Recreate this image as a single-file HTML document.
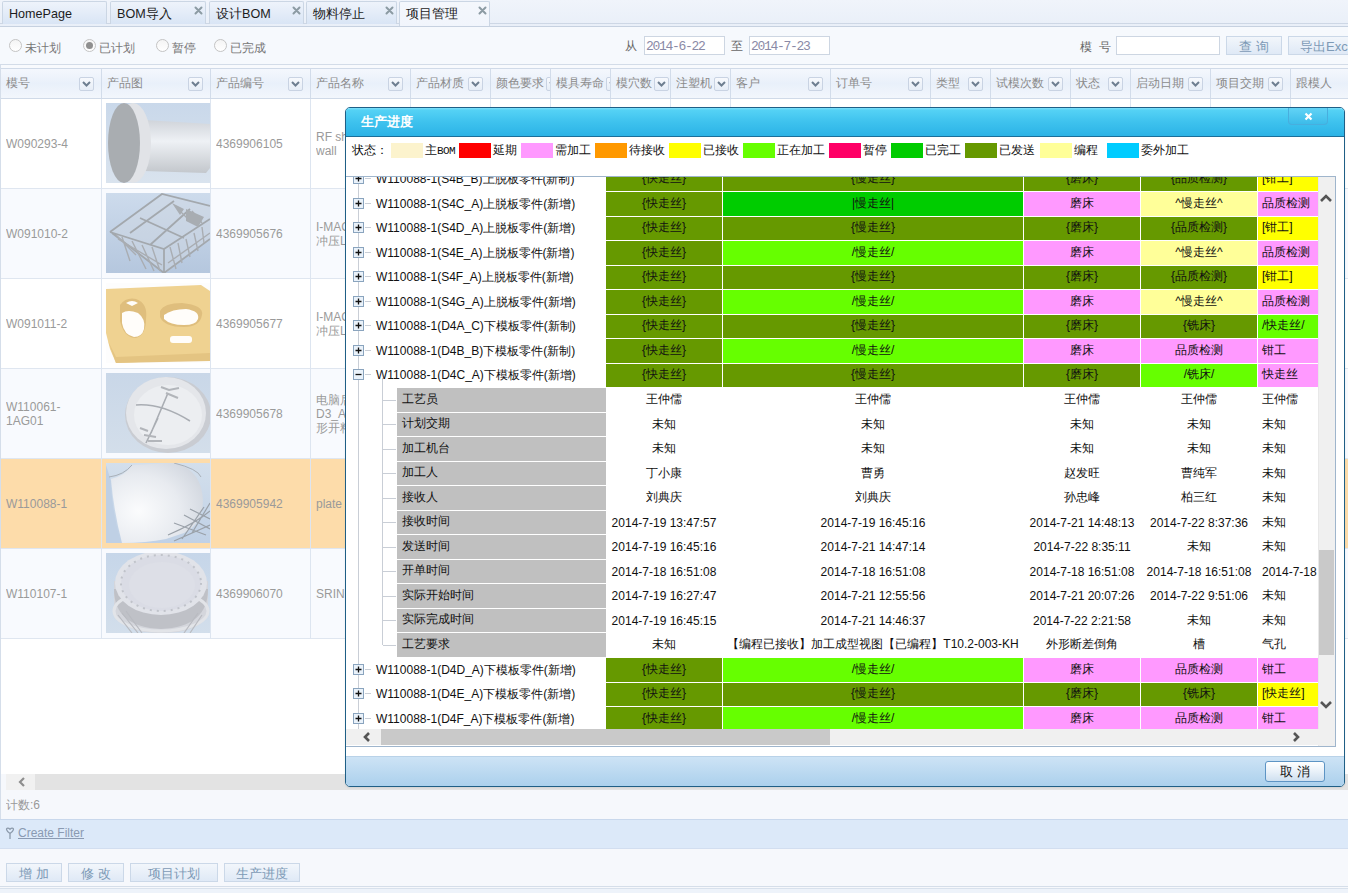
<!DOCTYPE html><html><head><meta charset="utf-8"><style>

*{box-sizing:border-box}
html,body{margin:0;padding:0}
body{width:1348px;height:893px;overflow:hidden;position:relative;background:#f6f8fc;font-family:"Liberation Sans",sans-serif;font-size:12px;color:#333}
.ab{position:absolute}
.tab{position:absolute;top:1px;height:23px;border:1px solid #cbd6e4;border-bottom:none;border-radius:2px 2px 0 0;background:linear-gradient(#eef3fb,#d9e5f5);font-size:12.6px;color:#1c1c1c;line-height:24px;padding-left:6px;white-space:nowrap}
.tab.act{background:linear-gradient(#f4f7fc,#f1f5fc);height:25px}
.tx{position:absolute;top:4px;width:9px;height:9px}
.radio{position:absolute;top:39px;width:13px;height:13px;border-radius:50%;border:1px solid #c4c4c4;background:linear-gradient(#f4f4f4,#fff)}
.rl{position:absolute;top:40px;font-size:12.4px;color:#777;line-height:17px;white-space:nowrap}
.inp{position:absolute;background:#fff;border:1px solid #cdd6e2}
.btn{position:absolute;border:1px solid #cbd8e8;background:linear-gradient(#f2f6fb,#dfe9f6);color:#7d9ab6;text-align:center;font-size:13px;white-space:nowrap}
.hc{position:absolute;top:69px;height:29px;border-right:1px solid #d2dcea;font-size:12px;color:#8b8b8b;line-height:29px;padding-left:6px;white-space:nowrap;overflow:hidden;display:flex;align-items:center}
.dd{position:relative;flex:none;margin-left:auto;margin-right:7px;width:15px;height:14px;border:1px solid #c9d3e3;border-radius:2px;background:linear-gradient(#f7f9fd,#e6edf7)}
.cell{position:absolute;font-size:12px;color:#9a9a9a;white-space:nowrap;overflow:hidden}
.vl{position:absolute;width:1px;background:#dde5f0}
.hl{position:absolute;height:1px;background:#dfe6f0}

</style></head><body>
<div class="ab" style="left:0;top:0;width:1348px;height:26px;background:linear-gradient(#f0f4fb,#e9eff8)"></div>
<div class="ab" style="left:0;top:23px;width:1348px;height:1px;background:#cdd7e5"></div>
<div class="ab" style="left:0;top:26px;width:1348px;height:1px;background:#c6d1e0"></div>
<div class="tab" style="left:2px;width:105px">HomePage
</div>
<div class="tab" style="left:110px;width:96px">BOM导入
<svg class="tx" style="left:83px" viewBox="0 0 9 9"><path d="M1.5 1.5L7.5 7.5M7.5 1.5L1.5 7.5" stroke="#8c9ba3" stroke-width="2" stroke-linecap="round"/></svg>
</div>
<div class="tab" style="left:209px;width:95px">设计BOM
<svg class="tx" style="left:82px" viewBox="0 0 9 9"><path d="M1.5 1.5L7.5 7.5M7.5 1.5L1.5 7.5" stroke="#8c9ba3" stroke-width="2" stroke-linecap="round"/></svg>
</div>
<div class="tab" style="left:306px;width:91px">物料停止
<svg class="tx" style="left:78px" viewBox="0 0 9 9"><path d="M1.5 1.5L7.5 7.5M7.5 1.5L1.5 7.5" stroke="#8c9ba3" stroke-width="2" stroke-linecap="round"/></svg>
</div>
<div class="tab act" style="left:399px;width:91px">项目管理
<svg class="tx" style="left:78px" viewBox="0 0 9 9"><path d="M1.5 1.5L7.5 7.5M7.5 1.5L1.5 7.5" stroke="#8c9ba3" stroke-width="2" stroke-linecap="round"/></svg>
</div>
<div class="ab" style="left:0;top:27px;width:1348px;height:37px;background:#f6f9fd"></div>
<div class="ab" style="left:0;top:64px;width:1348px;height:1px;background:#d3dce8"></div>
<div class="ab" style="left:0;top:65px;width:1348px;height:3px;background:#f8fafd"></div>
<div class="radio" style="left:9px"></div>
<div class="rl" style="left:25px">未计划</div>
<div class="radio" style="left:83px"></div>
<div class="ab" style="left:86px;top:42px;width:7px;height:7px;border-radius:50%;background:#8f8f8f"></div>
<div class="rl" style="left:99px">已计划</div>
<div class="radio" style="left:156px"></div>
<div class="rl" style="left:172px">暂停</div>
<div class="radio" style="left:214px"></div>
<div class="rl" style="left:230px">已完成</div>
<div class="rl" style="left:625px;top:38px;color:#666">从</div>
<div class="inp" style="left:644px;top:36px;width:81px;height:19px"></div>
<div class="ab" style="left:646px;top:38px;font:13px 'Liberation Mono',monospace;color:#8a8aa6;line-height:17px;letter-spacing:-1.3px">2014-6-22</div>
<div class="rl" style="left:731px;top:38px;color:#666">至</div>
<div class="inp" style="left:749px;top:36px;width:81px;height:19px"></div>
<div class="ab" style="left:751px;top:38px;font:13px 'Liberation Mono',monospace;color:#8a8aa6;line-height:17px;letter-spacing:-1.3px">2014-7-23</div>
<div class="rl" style="left:1080px;top:38.5px;color:#666">模&nbsp;&nbsp;号</div>
<div class="inp" style="left:1116px;top:36px;width:104px;height:19px"></div>
<div class="btn" style="left:1226px;top:36px;width:56px;height:19px;line-height:19px">查&nbsp;询</div>
<div class="btn" style="left:1288px;top:36px;width:70px;height:19px;line-height:19px;text-align:left;padding-left:11px">导出Excel</div>
<div class="ab" style="left:0;top:68px;width:1348px;height:31px;border-top:1px solid #d0dae8;border-bottom:1px solid #d0dae8;background:linear-gradient(#f4f7fd 0%,#e9f0fa 50%,#f2f6fc 100%)"></div>
<div class="hc" style="left:0px;width:102px"><span style="flex:none;margin-right:2px">模号</span>
<div class="dd"><svg style="position:absolute;left:2px;top:3px" width="9" height="6" viewBox="0 0 9 6"><path d="M1 1L4.5 4.5L8 1" stroke="#6e7e90" stroke-width="2" fill="none"/></svg></div>
</div>
<div class="hc" style="left:101px;width:110px"><span style="flex:none;margin-right:2px">产品图</span>
<div class="dd"><svg style="position:absolute;left:2px;top:3px" width="9" height="6" viewBox="0 0 9 6"><path d="M1 1L4.5 4.5L8 1" stroke="#6e7e90" stroke-width="2" fill="none"/></svg></div>
</div>
<div class="hc" style="left:210px;width:101px"><span style="flex:none;margin-right:2px">产品编号</span>
<div class="dd"><svg style="position:absolute;left:2px;top:3px" width="9" height="6" viewBox="0 0 9 6"><path d="M1 1L4.5 4.5L8 1" stroke="#6e7e90" stroke-width="2" fill="none"/></svg></div>
</div>
<div class="hc" style="left:310px;width:101px"><span style="flex:none;margin-right:2px">产品名称</span>
<div class="dd"><svg style="position:absolute;left:2px;top:3px" width="9" height="6" viewBox="0 0 9 6"><path d="M1 1L4.5 4.5L8 1" stroke="#6e7e90" stroke-width="2" fill="none"/></svg></div>
</div>
<div class="hc" style="left:410px;width:81px"><span style="flex:none;margin-right:2px">产品材质</span>
<div class="dd"><svg style="position:absolute;left:2px;top:3px" width="9" height="6" viewBox="0 0 9 6"><path d="M1 1L4.5 4.5L8 1" stroke="#6e7e90" stroke-width="2" fill="none"/></svg></div>
</div>
<div class="hc" style="left:490px;width:61px"><span style="flex:none;margin-right:2px">颜色要求</span>
<div class="dd"><svg style="position:absolute;left:2px;top:3px" width="9" height="6" viewBox="0 0 9 6"><path d="M1 1L4.5 4.5L8 1" stroke="#6e7e90" stroke-width="2" fill="none"/></svg></div>
</div>
<div class="hc" style="left:550px;width:61px"><span style="flex:none;margin-right:2px">模具寿命</span>
<div class="dd"><svg style="position:absolute;left:2px;top:3px" width="9" height="6" viewBox="0 0 9 6"><path d="M1 1L4.5 4.5L8 1" stroke="#6e7e90" stroke-width="2" fill="none"/></svg></div>
</div>
<div class="hc" style="left:610px;width:61px"><span style="flex:none;margin-right:2px">模穴数</span>
<div class="dd"><svg style="position:absolute;left:2px;top:3px" width="9" height="6" viewBox="0 0 9 6"><path d="M1 1L4.5 4.5L8 1" stroke="#6e7e90" stroke-width="2" fill="none"/></svg></div>
</div>
<div class="hc" style="left:670px;width:61px"><span style="flex:none;margin-right:2px">注塑机</span>
<div class="dd"><svg style="position:absolute;left:2px;top:3px" width="9" height="6" viewBox="0 0 9 6"><path d="M1 1L4.5 4.5L8 1" stroke="#6e7e90" stroke-width="2" fill="none"/></svg></div>
</div>
<div class="hc" style="left:730px;width:101px"><span style="flex:none;margin-right:2px">客户</span>
<div class="dd"><svg style="position:absolute;left:2px;top:3px" width="9" height="6" viewBox="0 0 9 6"><path d="M1 1L4.5 4.5L8 1" stroke="#6e7e90" stroke-width="2" fill="none"/></svg></div>
</div>
<div class="hc" style="left:830px;width:101px"><span style="flex:none;margin-right:2px">订单号</span>
<div class="dd"><svg style="position:absolute;left:2px;top:3px" width="9" height="6" viewBox="0 0 9 6"><path d="M1 1L4.5 4.5L8 1" stroke="#6e7e90" stroke-width="2" fill="none"/></svg></div>
</div>
<div class="hc" style="left:930px;width:61px"><span style="flex:none;margin-right:2px">类型</span>
<div class="dd"><svg style="position:absolute;left:2px;top:3px" width="9" height="6" viewBox="0 0 9 6"><path d="M1 1L4.5 4.5L8 1" stroke="#6e7e90" stroke-width="2" fill="none"/></svg></div>
</div>
<div class="hc" style="left:990px;width:81px"><span style="flex:none;margin-right:2px">试模次数</span>
<div class="dd"><svg style="position:absolute;left:2px;top:3px" width="9" height="6" viewBox="0 0 9 6"><path d="M1 1L4.5 4.5L8 1" stroke="#6e7e90" stroke-width="2" fill="none"/></svg></div>
</div>
<div class="hc" style="left:1070px;width:61px"><span style="flex:none;margin-right:2px">状态</span>
<div class="dd"><svg style="position:absolute;left:2px;top:3px" width="9" height="6" viewBox="0 0 9 6"><path d="M1 1L4.5 4.5L8 1" stroke="#6e7e90" stroke-width="2" fill="none"/></svg></div>
</div>
<div class="hc" style="left:1130px;width:81px"><span style="flex:none;margin-right:2px">启动日期</span>
<div class="dd"><svg style="position:absolute;left:2px;top:3px" width="9" height="6" viewBox="0 0 9 6"><path d="M1 1L4.5 4.5L8 1" stroke="#6e7e90" stroke-width="2" fill="none"/></svg></div>
</div>
<div class="hc" style="left:1210px;width:81px"><span style="flex:none;margin-right:2px">项目交期</span>
<div class="dd"><svg style="position:absolute;left:2px;top:3px" width="9" height="6" viewBox="0 0 9 6"><path d="M1 1L4.5 4.5L8 1" stroke="#6e7e90" stroke-width="2" fill="none"/></svg></div>
</div>
<div class="hc" style="left:1290px;width:111px"><span style="flex:none;margin-right:2px">跟模人</span>
</div>
<div class="ab" style="left:0;top:99px;width:1348px;height:89px;background:#ffffff"></div>
<div class="ab" style="left:0;top:188px;width:1348px;height:1px;background:#dfe6f0"></div>
<div class="cell" style="left:6px;top:99px;height:89px;width:94px;display:flex;align-items:center;line-height:14px">W090293-4</div>
<div class="cell" style="left:216px;top:99px;height:89px;width:94px;display:flex;align-items:center">4369906105</div>
<div class="cell" style="left:316px;top:99px;height:89px;width:94px;display:flex;align-items:center;line-height:14px">RF sh<br>wall</div>
<div class="ab" id="img0" style="left:106px;top:103px;width:104px;height:80px;overflow:hidden"><svg width="104" height="80" viewBox="0 0 104 80"><defs><linearGradient id="g0" x1="0" y1="0" x2="0" y2="1"><stop offset="0" stop-color="#c9d8ea"/><stop offset="1" stop-color="#d9e3ee"/></linearGradient>
<linearGradient id="c0" x1="0" y1="0" x2="0" y2="1"><stop offset="0" stop-color="#d0d4da"/><stop offset=".4" stop-color="#eef1f5"/><stop offset="1" stop-color="#c3c7cc"/></linearGradient></defs>
<rect width="104" height="80" fill="url(#g0)"/><path d="M38 17L104 21V65L100 70L38 68Z" fill="url(#c0)"/><ellipse cx="27" cy="40" rx="18" ry="40" fill="#e1e3e7"/><ellipse cx="18" cy="40" rx="16" ry="40" fill="#a9adb1"/></svg></div>
<div class="ab" style="left:0;top:189px;width:1348px;height:89px;background:#f8fafe"></div>
<div class="ab" style="left:0;top:278px;width:1348px;height:1px;background:#dfe6f0"></div>
<div class="cell" style="left:6px;top:189px;height:89px;width:94px;display:flex;align-items:center;line-height:14px">W091010-2</div>
<div class="cell" style="left:216px;top:189px;height:89px;width:94px;display:flex;align-items:center">4369905676</div>
<div class="cell" style="left:316px;top:189px;height:89px;width:94px;display:flex;align-items:center;line-height:14px">I-MAC<br>冲压L</div>
<div class="ab" id="img1" style="left:106px;top:193px;width:104px;height:80px;overflow:hidden"><svg width="104" height="80" viewBox="0 0 104 80"><defs><linearGradient id="g1" x1="0" y1="0" x2="0" y2="1"><stop offset="0" stop-color="#cddbec"/><stop offset="1" stop-color="#b5c7de"/></linearGradient></defs>
<rect width="104" height="80" fill="url(#g1)"/>
<path d="M4 39L56 1L104 13L104 45L60 80Z" fill="#cfd8e2" opacity=".5"/>
<path d="M4 39L56 1L104 13M4 39L58 56L104 26M6 40L58 80L104 46M58 56V80M34 25L78 45M44 52L84 16M24 40L68 8" stroke="#a3a8ad" stroke-width="1.8" fill="none"/>
<path d="M10 42L30 62M16 44L24 68M26 48L40 76M36 52L48 78M46 54L54 78M64 54L70 76M72 50L76 70M80 46L84 64M88 40L92 58M96 34L98 50M62 70L104 40M12 46L56 72M70 14L82 26M86 18L96 30" stroke="#a9adb2" stroke-width="1.4" fill="none"/>
<path d="M66 10L78 16L74 22ZM80 16L98 24L92 34L80 28Z" fill="#a8adb2"/></svg></div>
<div class="ab" style="left:0;top:279px;width:1348px;height:89px;background:#ffffff"></div>
<div class="ab" style="left:0;top:368px;width:1348px;height:1px;background:#dfe6f0"></div>
<div class="cell" style="left:6px;top:279px;height:89px;width:94px;display:flex;align-items:center;line-height:14px">W091011-2</div>
<div class="cell" style="left:216px;top:279px;height:89px;width:94px;display:flex;align-items:center">4369905677</div>
<div class="cell" style="left:316px;top:279px;height:89px;width:94px;display:flex;align-items:center;line-height:14px">I-MAC<br>冲压L</div>
<div class="ab" id="img2" style="left:106px;top:283px;width:104px;height:80px;overflow:hidden"><svg width="104" height="80" viewBox="0 0 104 80"><rect width="104" height="80" fill="#fdfdfd"/>
<path d="M0 6L95 2L104 8V76L10 80L4 66L0 50Z" fill="#efd291"/>
<path d="M2 58L10 74L104 70V78L10 80Z" fill="#e4c482"/>
<path d="M14 22Q20 14 30 16Q42 20 40 36Q40 52 30 55Q18 55 14 38Z" fill="#dfbe7d"/>
<path d="M16 30Q22 26 32 30Q40 36 38 46Q36 54 28 54Q18 52 16 40Z" fill="#fffdfa"/>
<path d="M20 20Q26 16 32 20L26 23Z" fill="#fffdfa"/>
<path d="M54 28Q58 20 76 20Q98 22 96 32Q94 44 78 44Q58 44 54 34Z" fill="#dfbe7d"/>
<path d="M58 32Q66 26 80 26Q94 28 92 36Q90 42 78 42Q64 42 58 36Z" fill="#fffdfa"/>
<rect x="64" y="53" width="22" height="7" rx="3" fill="#fffdfa"/></svg></div>
<div class="ab" style="left:0;top:369px;width:1348px;height:89px;background:#f8fafe"></div>
<div class="ab" style="left:0;top:458px;width:1348px;height:1px;background:#dfe6f0"></div>
<div class="cell" style="left:6px;top:369px;height:89px;width:94px;display:flex;align-items:center;line-height:14px">W110061-<br>1AG01</div>
<div class="cell" style="left:216px;top:369px;height:89px;width:94px;display:flex;align-items:center">4369905678</div>
<div class="cell" style="left:316px;top:369px;height:89px;width:94px;display:flex;align-items:center;line-height:14px">电脑后<br>D3_A<br>形开料</div>
<div class="ab" id="img3" style="left:106px;top:373px;width:104px;height:80px;overflow:hidden"><svg width="104" height="80" viewBox="0 0 104 80"><defs><linearGradient id="g3" x1="0" y1="0" x2="0" y2="1"><stop offset="0" stop-color="#c9d7e8"/><stop offset="1" stop-color="#d3deea"/></linearGradient></defs>
<rect width="104" height="80" fill="url(#g3)"/>
<ellipse cx="62" cy="42" rx="43" ry="38" fill="#c9ccd2"/><ellipse cx="60" cy="40" rx="40" ry="36" fill="#e4e6ea"/><ellipse cx="62" cy="42" rx="34" ry="30" fill="#eceef1"/>
<path d="M30 32Q55 30 84 48M45 60L62 20M40 70L52 45" stroke="#a9adb3" stroke-width="1.6" fill="none"/>
<path d="M55 14l8 3l10 -2M60 20l12 5M34 55l8 3M38 62l12 2M42 68l14 0" stroke="#b2b5ba" stroke-width="2" fill="none"/></svg></div>
<div class="ab" style="left:0;top:459px;width:1348px;height:89px;background:#fddcaa"></div>
<div class="ab" style="left:0;top:548px;width:1348px;height:1px;background:#dfe6f0"></div>
<div class="cell" style="left:6px;top:459px;height:89px;width:94px;display:flex;align-items:center;line-height:14px">W110088-1</div>
<div class="cell" style="left:216px;top:459px;height:89px;width:94px;display:flex;align-items:center">4369905942</div>
<div class="cell" style="left:316px;top:459px;height:89px;width:94px;display:flex;align-items:center;line-height:14px">plate</div>
<div class="ab" id="img4" style="left:106px;top:463px;width:104px;height:80px;overflow:hidden"><svg width="104" height="80" viewBox="0 0 104 80"><defs><linearGradient id="g4" x1="0" y1="0" x2="0" y2="1"><stop offset="0" stop-color="#d3dfec"/><stop offset="1" stop-color="#c0d1e6"/></linearGradient>
<radialGradient id="r4" cx=".3" cy=".6" r=".75"><stop offset="0" stop-color="#fbfcfd"/><stop offset=".6" stop-color="#e8ebf0"/><stop offset="1" stop-color="#d3d8e0"/></radialGradient></defs>
<rect width="104" height="80" fill="url(#g4)"/>
<path d="M0 2L0 80L15 80Q6 50 5 18Z" fill="#bfd0e5"/>
<path d="M5 16Q20 12 26 2L70 0Q96 8 97 38Q96 62 78 70L60 76Q40 80 16 80Q8 50 5 16Z" fill="url(#r4)"/>
<path d="M3 14Q18 12 26 2M68 0Q92 6 95 14" stroke="#a9b0b8" stroke-width="1" fill="none"/>
<path d="M62 72Q90 60 104 48M68 78L104 62M84 46L104 56M78 52L104 66M68 60L100 72M86 70L104 40M76 76L98 44" stroke="#9aa1a9" stroke-width="1.2" fill="none"/></svg></div>
<div class="ab" style="left:0;top:549px;width:1348px;height:89px;background:#f8fafe"></div>
<div class="ab" style="left:0;top:638px;width:1348px;height:1px;background:#dfe6f0"></div>
<div class="cell" style="left:6px;top:549px;height:89px;width:94px;display:flex;align-items:center;line-height:14px">W110107-1</div>
<div class="cell" style="left:216px;top:549px;height:89px;width:94px;display:flex;align-items:center">4369906070</div>
<div class="cell" style="left:316px;top:549px;height:89px;width:94px;display:flex;align-items:center;line-height:14px">SRING</div>
<div class="ab" id="img5" style="left:106px;top:553px;width:104px;height:80px;overflow:hidden"><svg width="104" height="80" viewBox="0 0 104 80"><defs><linearGradient id="g5" x1="0" y1="0" x2="0" y2="1"><stop offset="0" stop-color="#c6d6e9"/><stop offset="1" stop-color="#d2deeb"/></linearGradient></defs>
<rect width="104" height="80" fill="url(#g5)"/>
<path d="M8 28L8 62Q20 80 55 80Q92 80 102 62L102 28Z" fill="#d4d6dc"/>
<path d="M8 36Q8 74 55 76Q102 74 102 36Z" fill="#bfc1c7"/>
<ellipse cx="55" cy="58" rx="47" ry="20" fill="none" stroke="#e2e4e8" stroke-width="3"/>
<ellipse cx="55" cy="30" rx="46" ry="32" fill="#e1e3e9"/>
<ellipse cx="55" cy="30" rx="40" ry="28" fill="#dadce5" stroke="#c0c3ca" stroke-width="2" stroke-dasharray="2 5"/>
<ellipse cx="56" cy="32" rx="33" ry="23" fill="#dddfe7"/>
<path d="M12 62L26 80M16 60L32 80M20 58L36 80M96 62L84 80M92 60L78 80" stroke="#b9bbc1" stroke-width="1.2"/></svg></div>
<div class="ab" style="left:0;top:639px;width:1348px;height:135px;background:#fff"></div>
<div class="vl" style="left:101px;top:99px;height:540px"></div>
<div class="vl" style="left:210px;top:99px;height:540px"></div>
<div class="vl" style="left:310px;top:99px;height:540px"></div>
<div class="vl" style="left:410px;top:99px;height:540px"></div>
<div class="vl" style="left:490px;top:99px;height:540px"></div>
<div class="vl" style="left:550px;top:99px;height:540px"></div>
<div class="vl" style="left:610px;top:99px;height:540px"></div>
<div class="vl" style="left:670px;top:99px;height:540px"></div>
<div class="vl" style="left:730px;top:99px;height:540px"></div>
<div class="vl" style="left:830px;top:99px;height:540px"></div>
<div class="vl" style="left:930px;top:99px;height:540px"></div>
<div class="vl" style="left:990px;top:99px;height:540px"></div>
<div class="vl" style="left:1070px;top:99px;height:540px"></div>
<div class="vl" style="left:1130px;top:99px;height:540px"></div>
<div class="vl" style="left:1210px;top:99px;height:540px"></div>
<div class="vl" style="left:1290px;top:99px;height:540px"></div>
<div class="vl" style="left:0px;top:65px;height:775px;background:#d5deea"></div>
<div class="ab" style="left:6px;top:774px;width:1342px;height:16px;background:#f1f1f1"></div>
<div class="ab" style="left:35px;top:774px;width:1313px;height:16px;background:#e3e3e3"></div>
<svg class="ab" style="left:18px;top:777px" width="8" height="10" viewBox="0 0 8 10"><path d="M6 1L2 5L6 9" stroke="#8e8e8e" stroke-width="2.2" fill="none"/></svg>
<div class="cell" style="left:6px;top:797px;line-height:16px;font-size:12px;color:#999">计数:6</div>
<div class="ab" style="left:0;top:819px;width:1348px;height:30px;background:#dce9f9;border-top:1px solid #c9d8ec;border-bottom:1px solid #d2def0"></div>
<svg class="ab" style="left:5px;top:827px" width="10" height="13" viewBox="0 0 10 13"><path d="M5 6.5C1 4 0.8 1.2 2.8 1.2C4 1.2 5 2.2 5 2.2C5 2.2 6 1.2 7.2 1.2C9.2 1.2 9 4 5 6.5ZM5 6.5V12" stroke="#8c9aab" stroke-width="1.3" fill="none"/></svg>
<div class="ab" style="left:18px;top:825px;font-size:12px;color:#8a9ab2;text-decoration:underline;line-height:16px">Create Filter</div>
<div class="btn" style="left:6px;top:863px;width:56px;height:19px;line-height:19px">增&nbsp;加</div>
<div class="btn" style="left:68px;top:863px;width:56px;height:19px;line-height:19px">修&nbsp;改</div>
<div class="btn" style="left:130px;top:863px;width:88px;height:19px;line-height:19px">项目计划</div>
<div class="btn" style="left:224px;top:863px;width:76px;height:19px;line-height:19px">生产进度</div>
<div class="ab" style="left:0;top:886px;width:1348px;height:1px;background:#d5dee9"></div>
<div class="ab" style="left:0;top:888px;width:1348px;height:5px;background:#eef3fa;border-top:1px solid #d8e1ec"></div>
<div class="ab" style="left:345px;top:107px;width:1000px;height:680px;border:1px solid #1f5f86;border-radius:5px;background:#fff;overflow:hidden;box-shadow:0 1px 2px rgba(0,0,0,.08)"><div class="ab" style="left:0;top:0;width:998px;height:29px;background:linear-gradient(#7fe0fb 0px,#55d2f5 2px,#3ec2ee 14px,#2cb3e6 28px);border-bottom:1px solid #1b6f9a"></div><div class="ab" style="left:15px;top:6px;font-size:12.6px;font-weight:bold;color:#fff;line-height:16px;letter-spacing:0px">生产进度</div><div class="ab" style="left:942px;top:0px;width:40px;height:17px;border:1px solid #48aede;border-top:none;border-radius:0 0 4px 4px;background:linear-gradient(#62d3f6,#3cbbe9)"></div><svg class="ab" style="left:958px;top:4px" width="9" height="9" viewBox="0 0 9 9"><path d="M1.5 1.5L7.5 7.5M7.5 1.5L1.5 7.5" stroke="#fff" stroke-width="2.2"/></svg><div class="ab" style="left:6px;top:34px;font-size:12px;color:#111;line-height:16px">状态：</div><div class="ab" style="left:45px;top:35px;width:32px;height:15px;background:#fcf3cd"></div><div class="ab" style="left:79px;top:34px;font-size:12px;color:#111;line-height:16px;white-space:nowrap">主<span style="font:11px Liberation Mono,monospace;letter-spacing:-0.6px">BOM</span></div><div class="ab" style="left:113px;top:35px;width:32px;height:15px;background:#ff0000"></div><div class="ab" style="left:147px;top:34px;font-size:12px;color:#111;line-height:16px;white-space:nowrap">延期</div><div class="ab" style="left:175px;top:35px;width:32px;height:15px;background:#ff99ff"></div><div class="ab" style="left:209px;top:34px;font-size:12px;color:#111;line-height:16px;white-space:nowrap">需加工</div><div class="ab" style="left:249px;top:35px;width:32px;height:15px;background:#ff9900"></div><div class="ab" style="left:283px;top:34px;font-size:12px;color:#111;line-height:16px;white-space:nowrap">待接收</div><div class="ab" style="left:323px;top:35px;width:32px;height:15px;background:#ffff00"></div><div class="ab" style="left:357px;top:34px;font-size:12px;color:#111;line-height:16px;white-space:nowrap">已接收</div><div class="ab" style="left:397px;top:35px;width:32px;height:15px;background:#66ff00"></div><div class="ab" style="left:431px;top:34px;font-size:12px;color:#111;line-height:16px;white-space:nowrap">正在加工</div><div class="ab" style="left:483px;top:35px;width:32px;height:15px;background:#ff0066"></div><div class="ab" style="left:517px;top:34px;font-size:12px;color:#111;line-height:16px;white-space:nowrap">暂停</div><div class="ab" style="left:545px;top:35px;width:32px;height:15px;background:#00cc00"></div><div class="ab" style="left:579px;top:34px;font-size:12px;color:#111;line-height:16px;white-space:nowrap">已完工</div><div class="ab" style="left:619px;top:35px;width:32px;height:15px;background:#669900"></div><div class="ab" style="left:653px;top:34px;font-size:12px;color:#111;line-height:16px;white-space:nowrap">已发送</div><div class="ab" style="left:694px;top:35px;width:32px;height:15px;background:#ffff99"></div><div class="ab" style="left:728px;top:34px;font-size:12px;color:#111;line-height:16px;white-space:nowrap">编程</div><div class="ab" style="left:761px;top:35px;width:32px;height:15px;background:#00ccff"></div><div class="ab" style="left:795px;top:34px;font-size:12px;color:#111;line-height:16px;white-space:nowrap">委外加工</div><div class="ab" style="left:0px;top:68px;width:990px;height:571px;border:1px solid #9fb5cc;border-left:none;overflow:hidden;background:#fff"><div class="ab" style="left:12px;top:0px;width:1px;height:560px;background:#c9ced6;z-index:0"></div><div class="ab" style="left:36px;top:201px;width:1px;height:267px;background:#c9ced6"></div><svg class="ab" style="left:7px;top:-4px" width="11" height="11" viewBox="0 0 11 11"><rect x=".5" y=".5" width="10" height="10" fill="#eaf2fa" stroke="#8aa4be"/><path d="M2.5 5.5h6M5.5 2.5v6" stroke="#111" stroke-width="1.3"/></svg><div class="ab" style="left:19px;top:1px;width:6px;height:1px;background:#c9ced6"></div><div style="position:absolute;font-size:12px;line-height:16px;white-space:nowrap;color:#111;left:30px;top:-6px">W110088-1(S4B_B)上脱板零件(新制)</div><div class="ab" style="left:260px;top:-10px;width:116px;height:24px;background:#669900;text-align:center;font-size:12px;line-height:22px;color:#111;white-space:nowrap;overflow:hidden">{快走丝}</div><div class="ab" style="left:377px;top:-10px;width:300px;height:24px;background:#669900;text-align:center;font-size:12px;line-height:22px;color:#111;white-space:nowrap;overflow:hidden">{慢走丝}</div><div class="ab" style="left:678px;top:-10px;width:116px;height:24px;background:#669900;text-align:center;font-size:12px;line-height:22px;color:#111;white-space:nowrap;overflow:hidden">{磨床}</div><div class="ab" style="left:795px;top:-10px;width:116px;height:24px;background:#669900;text-align:center;font-size:12px;line-height:22px;color:#111;white-space:nowrap;overflow:hidden">{品质检测}</div><div class="ab" style="left:912px;top:-10px;width:60px;height:24px;background:#ffff00;text-align:left;padding-left:4px;font-size:12px;line-height:22px;color:#111;white-space:nowrap;overflow:hidden">[钳工]</div><svg class="ab" style="left:7px;top:21px" width="11" height="11" viewBox="0 0 11 11"><rect x=".5" y=".5" width="10" height="10" fill="#eaf2fa" stroke="#8aa4be"/><path d="M2.5 5.5h6M5.5 2.5v6" stroke="#111" stroke-width="1.3"/></svg><div class="ab" style="left:19px;top:26px;width:6px;height:1px;background:#c9ced6"></div><div style="position:absolute;font-size:12px;line-height:16px;white-space:nowrap;color:#111;left:30px;top:19px">W110088-1(S4C_A)上脱板零件(新增)</div><div class="ab" style="left:260px;top:15px;width:116px;height:24px;background:#669900;text-align:center;font-size:12px;line-height:22px;color:#111;white-space:nowrap;overflow:hidden">{快走丝}</div><div class="ab" style="left:377px;top:15px;width:300px;height:24px;background:#00cc00;text-align:center;font-size:12px;line-height:22px;color:#111;white-space:nowrap;overflow:hidden">|慢走丝|</div><div class="ab" style="left:678px;top:15px;width:116px;height:24px;background:#ff99ff;text-align:center;font-size:12px;line-height:22px;color:#111;white-space:nowrap;overflow:hidden">磨床</div><div class="ab" style="left:795px;top:15px;width:116px;height:24px;background:#ffff99;text-align:center;font-size:12px;line-height:22px;color:#111;white-space:nowrap;overflow:hidden">^慢走丝^</div><div class="ab" style="left:912px;top:15px;width:60px;height:24px;background:#ff99ff;text-align:left;padding-left:4px;font-size:12px;line-height:22px;color:#111;white-space:nowrap;overflow:hidden">品质检测</div><svg class="ab" style="left:7px;top:45px" width="11" height="11" viewBox="0 0 11 11"><rect x=".5" y=".5" width="10" height="10" fill="#eaf2fa" stroke="#8aa4be"/><path d="M2.5 5.5h6M5.5 2.5v6" stroke="#111" stroke-width="1.3"/></svg><div class="ab" style="left:19px;top:50px;width:6px;height:1px;background:#c9ced6"></div><div style="position:absolute;font-size:12px;line-height:16px;white-space:nowrap;color:#111;left:30px;top:43px">W110088-1(S4D_A)上脱板零件(新增)</div><div class="ab" style="left:260px;top:40px;width:116px;height:23px;background:#669900;text-align:center;font-size:12px;line-height:21px;color:#111;white-space:nowrap;overflow:hidden">{快走丝}</div><div class="ab" style="left:377px;top:40px;width:300px;height:23px;background:#669900;text-align:center;font-size:12px;line-height:21px;color:#111;white-space:nowrap;overflow:hidden">{慢走丝}</div><div class="ab" style="left:678px;top:40px;width:116px;height:23px;background:#669900;text-align:center;font-size:12px;line-height:21px;color:#111;white-space:nowrap;overflow:hidden">{磨床}</div><div class="ab" style="left:795px;top:40px;width:116px;height:23px;background:#669900;text-align:center;font-size:12px;line-height:21px;color:#111;white-space:nowrap;overflow:hidden">{品质检测}</div><div class="ab" style="left:912px;top:40px;width:60px;height:23px;background:#ffff00;text-align:left;padding-left:4px;font-size:12px;line-height:21px;color:#111;white-space:nowrap;overflow:hidden">[钳工]</div><svg class="ab" style="left:7px;top:70px" width="11" height="11" viewBox="0 0 11 11"><rect x=".5" y=".5" width="10" height="10" fill="#eaf2fa" stroke="#8aa4be"/><path d="M2.5 5.5h6M5.5 2.5v6" stroke="#111" stroke-width="1.3"/></svg><div class="ab" style="left:19px;top:75px;width:6px;height:1px;background:#c9ced6"></div><div style="position:absolute;font-size:12px;line-height:16px;white-space:nowrap;color:#111;left:30px;top:68px">W110088-1(S4E_A)上脱板零件(新增)</div><div class="ab" style="left:260px;top:64px;width:116px;height:24px;background:#669900;text-align:center;font-size:12px;line-height:22px;color:#111;white-space:nowrap;overflow:hidden">{快走丝}</div><div class="ab" style="left:377px;top:64px;width:300px;height:24px;background:#66ff00;text-align:center;font-size:12px;line-height:22px;color:#111;white-space:nowrap;overflow:hidden">/慢走丝/</div><div class="ab" style="left:678px;top:64px;width:116px;height:24px;background:#ff99ff;text-align:center;font-size:12px;line-height:22px;color:#111;white-space:nowrap;overflow:hidden">磨床</div><div class="ab" style="left:795px;top:64px;width:116px;height:24px;background:#ffff99;text-align:center;font-size:12px;line-height:22px;color:#111;white-space:nowrap;overflow:hidden">^慢走丝^</div><div class="ab" style="left:912px;top:64px;width:60px;height:24px;background:#ff99ff;text-align:left;padding-left:4px;font-size:12px;line-height:22px;color:#111;white-space:nowrap;overflow:hidden">品质检测</div><svg class="ab" style="left:7px;top:94px" width="11" height="11" viewBox="0 0 11 11"><rect x=".5" y=".5" width="10" height="10" fill="#eaf2fa" stroke="#8aa4be"/><path d="M2.5 5.5h6M5.5 2.5v6" stroke="#111" stroke-width="1.3"/></svg><div class="ab" style="left:19px;top:99px;width:6px;height:1px;background:#c9ced6"></div><div style="position:absolute;font-size:12px;line-height:16px;white-space:nowrap;color:#111;left:30px;top:92px">W110088-1(S4F_A)上脱板零件(新增)</div><div class="ab" style="left:260px;top:89px;width:116px;height:23px;background:#669900;text-align:center;font-size:12px;line-height:21px;color:#111;white-space:nowrap;overflow:hidden">{快走丝}</div><div class="ab" style="left:377px;top:89px;width:300px;height:23px;background:#669900;text-align:center;font-size:12px;line-height:21px;color:#111;white-space:nowrap;overflow:hidden">{慢走丝}</div><div class="ab" style="left:678px;top:89px;width:116px;height:23px;background:#669900;text-align:center;font-size:12px;line-height:21px;color:#111;white-space:nowrap;overflow:hidden">{磨床}</div><div class="ab" style="left:795px;top:89px;width:116px;height:23px;background:#669900;text-align:center;font-size:12px;line-height:21px;color:#111;white-space:nowrap;overflow:hidden">{品质检测}</div><div class="ab" style="left:912px;top:89px;width:60px;height:23px;background:#ffff00;text-align:left;padding-left:4px;font-size:12px;line-height:21px;color:#111;white-space:nowrap;overflow:hidden">[钳工]</div><svg class="ab" style="left:7px;top:119px" width="11" height="11" viewBox="0 0 11 11"><rect x=".5" y=".5" width="10" height="10" fill="#eaf2fa" stroke="#8aa4be"/><path d="M2.5 5.5h6M5.5 2.5v6" stroke="#111" stroke-width="1.3"/></svg><div class="ab" style="left:19px;top:124px;width:6px;height:1px;background:#c9ced6"></div><div style="position:absolute;font-size:12px;line-height:16px;white-space:nowrap;color:#111;left:30px;top:117px">W110088-1(S4G_A)上脱板零件(新增)</div><div class="ab" style="left:260px;top:113px;width:116px;height:24px;background:#669900;text-align:center;font-size:12px;line-height:22px;color:#111;white-space:nowrap;overflow:hidden">{快走丝}</div><div class="ab" style="left:377px;top:113px;width:300px;height:24px;background:#66ff00;text-align:center;font-size:12px;line-height:22px;color:#111;white-space:nowrap;overflow:hidden">/慢走丝/</div><div class="ab" style="left:678px;top:113px;width:116px;height:24px;background:#ff99ff;text-align:center;font-size:12px;line-height:22px;color:#111;white-space:nowrap;overflow:hidden">磨床</div><div class="ab" style="left:795px;top:113px;width:116px;height:24px;background:#ffff99;text-align:center;font-size:12px;line-height:22px;color:#111;white-space:nowrap;overflow:hidden">^慢走丝^</div><div class="ab" style="left:912px;top:113px;width:60px;height:24px;background:#ff99ff;text-align:left;padding-left:4px;font-size:12px;line-height:22px;color:#111;white-space:nowrap;overflow:hidden">品质检测</div><svg class="ab" style="left:7px;top:143px" width="11" height="11" viewBox="0 0 11 11"><rect x=".5" y=".5" width="10" height="10" fill="#eaf2fa" stroke="#8aa4be"/><path d="M2.5 5.5h6M5.5 2.5v6" stroke="#111" stroke-width="1.3"/></svg><div class="ab" style="left:19px;top:148px;width:6px;height:1px;background:#c9ced6"></div><div style="position:absolute;font-size:12px;line-height:16px;white-space:nowrap;color:#111;left:30px;top:141px">W110088-1(D4A_C)下模板零件(新制)</div><div class="ab" style="left:260px;top:138px;width:116px;height:23px;background:#669900;text-align:center;font-size:12px;line-height:21px;color:#111;white-space:nowrap;overflow:hidden">{快走丝}</div><div class="ab" style="left:377px;top:138px;width:300px;height:23px;background:#669900;text-align:center;font-size:12px;line-height:21px;color:#111;white-space:nowrap;overflow:hidden">{慢走丝}</div><div class="ab" style="left:678px;top:138px;width:116px;height:23px;background:#669900;text-align:center;font-size:12px;line-height:21px;color:#111;white-space:nowrap;overflow:hidden">{磨床}</div><div class="ab" style="left:795px;top:138px;width:116px;height:23px;background:#669900;text-align:center;font-size:12px;line-height:21px;color:#111;white-space:nowrap;overflow:hidden">{铣床}</div><div class="ab" style="left:912px;top:138px;width:60px;height:23px;background:#66ff00;text-align:left;padding-left:4px;font-size:12px;line-height:21px;color:#111;white-space:nowrap;overflow:hidden">/快走丝/</div><svg class="ab" style="left:7px;top:168px" width="11" height="11" viewBox="0 0 11 11"><rect x=".5" y=".5" width="10" height="10" fill="#eaf2fa" stroke="#8aa4be"/><path d="M2.5 5.5h6M5.5 2.5v6" stroke="#111" stroke-width="1.3"/></svg><div class="ab" style="left:19px;top:173px;width:6px;height:1px;background:#c9ced6"></div><div style="position:absolute;font-size:12px;line-height:16px;white-space:nowrap;color:#111;left:30px;top:166px">W110088-1(D4B_B)下模板零件(新制)</div><div class="ab" style="left:260px;top:162px;width:116px;height:24px;background:#669900;text-align:center;font-size:12px;line-height:22px;color:#111;white-space:nowrap;overflow:hidden">{快走丝}</div><div class="ab" style="left:377px;top:162px;width:300px;height:24px;background:#66ff00;text-align:center;font-size:12px;line-height:22px;color:#111;white-space:nowrap;overflow:hidden">/慢走丝/</div><div class="ab" style="left:678px;top:162px;width:116px;height:24px;background:#ff99ff;text-align:center;font-size:12px;line-height:22px;color:#111;white-space:nowrap;overflow:hidden">磨床</div><div class="ab" style="left:795px;top:162px;width:116px;height:24px;background:#ff99ff;text-align:center;font-size:12px;line-height:22px;color:#111;white-space:nowrap;overflow:hidden">品质检测</div><div class="ab" style="left:912px;top:162px;width:60px;height:24px;background:#ff99ff;text-align:left;padding-left:4px;font-size:12px;line-height:22px;color:#111;white-space:nowrap;overflow:hidden">钳工</div><svg class="ab" style="left:7px;top:192px" width="11" height="11" viewBox="0 0 11 11"><rect x=".5" y=".5" width="10" height="10" fill="#eaf2fa" stroke="#8aa4be"/><path d="M2.5 5.5h6" stroke="#111" stroke-width="1.3"/></svg><div class="ab" style="left:19px;top:197px;width:6px;height:1px;background:#c9ced6"></div><div style="position:absolute;font-size:12px;line-height:16px;white-space:nowrap;color:#111;left:30px;top:190px">W110088-1(D4C_A)下模板零件(新增)</div><div class="ab" style="left:260px;top:187px;width:116px;height:23px;background:#669900;text-align:center;font-size:12px;line-height:21px;color:#111;white-space:nowrap;overflow:hidden">{快走丝}</div><div class="ab" style="left:377px;top:187px;width:300px;height:23px;background:#669900;text-align:center;font-size:12px;line-height:21px;color:#111;white-space:nowrap;overflow:hidden">{慢走丝}</div><div class="ab" style="left:678px;top:187px;width:116px;height:23px;background:#669900;text-align:center;font-size:12px;line-height:21px;color:#111;white-space:nowrap;overflow:hidden">{磨床}</div><div class="ab" style="left:795px;top:187px;width:116px;height:23px;background:#66ff00;text-align:center;font-size:12px;line-height:21px;color:#111;white-space:nowrap;overflow:hidden">/铣床/</div><div class="ab" style="left:912px;top:187px;width:60px;height:23px;background:#ff99ff;text-align:left;padding-left:4px;font-size:12px;line-height:21px;color:#111;white-space:nowrap;overflow:hidden">快走丝</div><div class="ab" style="left:51px;top:211px;width:209px;height:24px;background:#c0c0c0;padding-left:5px;font-size:12px;line-height:22px;color:#111">工艺员</div><div class="ab" style="left:37px;top:223px;width:13px;height:1px;background:#c9ced6"></div><div class="ab" style="left:260px;top:211px;width:116px;height:24px;text-align:center;font-size:12px;line-height:23px;color:#111;white-space:nowrap;overflow:hidden">王仲儒</div><div class="ab" style="left:377px;top:211px;width:300px;height:24px;text-align:center;font-size:12px;line-height:23px;color:#111;white-space:nowrap;overflow:hidden">王仲儒</div><div class="ab" style="left:678px;top:211px;width:116px;height:24px;text-align:center;font-size:12px;line-height:23px;color:#111;white-space:nowrap;overflow:hidden">王仲儒</div><div class="ab" style="left:795px;top:211px;width:116px;height:24px;text-align:center;font-size:12px;line-height:23px;color:#111;white-space:nowrap;overflow:hidden">王仲儒</div><div class="ab" style="left:912px;top:211px;width:60px;height:24px;text-align:left;padding-left:4px;font-size:12px;line-height:23px;color:#111;white-space:nowrap;overflow:hidden">王仲儒</div><div class="ab" style="left:51px;top:236px;width:209px;height:23px;background:#c0c0c0;padding-left:5px;font-size:12px;line-height:21px;color:#111">计划交期</div><div class="ab" style="left:37px;top:247px;width:13px;height:1px;background:#c9ced6"></div><div class="ab" style="left:260px;top:236px;width:116px;height:23px;text-align:center;font-size:12px;line-height:22px;color:#111;white-space:nowrap;overflow:hidden">未知</div><div class="ab" style="left:377px;top:236px;width:300px;height:23px;text-align:center;font-size:12px;line-height:22px;color:#111;white-space:nowrap;overflow:hidden">未知</div><div class="ab" style="left:678px;top:236px;width:116px;height:23px;text-align:center;font-size:12px;line-height:22px;color:#111;white-space:nowrap;overflow:hidden">未知</div><div class="ab" style="left:795px;top:236px;width:116px;height:23px;text-align:center;font-size:12px;line-height:22px;color:#111;white-space:nowrap;overflow:hidden">未知</div><div class="ab" style="left:912px;top:236px;width:60px;height:23px;text-align:left;padding-left:4px;font-size:12px;line-height:22px;color:#111;white-space:nowrap;overflow:hidden">未知</div><div class="ab" style="left:51px;top:260px;width:209px;height:24px;background:#c0c0c0;padding-left:5px;font-size:12px;line-height:22px;color:#111">加工机台</div><div class="ab" style="left:37px;top:272px;width:13px;height:1px;background:#c9ced6"></div><div class="ab" style="left:260px;top:260px;width:116px;height:24px;text-align:center;font-size:12px;line-height:23px;color:#111;white-space:nowrap;overflow:hidden">未知</div><div class="ab" style="left:377px;top:260px;width:300px;height:24px;text-align:center;font-size:12px;line-height:23px;color:#111;white-space:nowrap;overflow:hidden">未知</div><div class="ab" style="left:678px;top:260px;width:116px;height:24px;text-align:center;font-size:12px;line-height:23px;color:#111;white-space:nowrap;overflow:hidden">未知</div><div class="ab" style="left:795px;top:260px;width:116px;height:24px;text-align:center;font-size:12px;line-height:23px;color:#111;white-space:nowrap;overflow:hidden">未知</div><div class="ab" style="left:912px;top:260px;width:60px;height:24px;text-align:left;padding-left:4px;font-size:12px;line-height:23px;color:#111;white-space:nowrap;overflow:hidden">未知</div><div class="ab" style="left:51px;top:285px;width:209px;height:23px;background:#c0c0c0;padding-left:5px;font-size:12px;line-height:21px;color:#111">加工人</div><div class="ab" style="left:37px;top:296px;width:13px;height:1px;background:#c9ced6"></div><div class="ab" style="left:260px;top:285px;width:116px;height:23px;text-align:center;font-size:12px;line-height:22px;color:#111;white-space:nowrap;overflow:hidden">丁小康</div><div class="ab" style="left:377px;top:285px;width:300px;height:23px;text-align:center;font-size:12px;line-height:22px;color:#111;white-space:nowrap;overflow:hidden">曹勇</div><div class="ab" style="left:678px;top:285px;width:116px;height:23px;text-align:center;font-size:12px;line-height:22px;color:#111;white-space:nowrap;overflow:hidden">赵发旺</div><div class="ab" style="left:795px;top:285px;width:116px;height:23px;text-align:center;font-size:12px;line-height:22px;color:#111;white-space:nowrap;overflow:hidden">曹纯军</div><div class="ab" style="left:912px;top:285px;width:60px;height:23px;text-align:left;padding-left:4px;font-size:12px;line-height:22px;color:#111;white-space:nowrap;overflow:hidden">未知</div><div class="ab" style="left:51px;top:309px;width:209px;height:24px;background:#c0c0c0;padding-left:5px;font-size:12px;line-height:22px;color:#111">接收人</div><div class="ab" style="left:37px;top:321px;width:13px;height:1px;background:#c9ced6"></div><div class="ab" style="left:260px;top:309px;width:116px;height:24px;text-align:center;font-size:12px;line-height:23px;color:#111;white-space:nowrap;overflow:hidden">刘典庆</div><div class="ab" style="left:377px;top:309px;width:300px;height:24px;text-align:center;font-size:12px;line-height:23px;color:#111;white-space:nowrap;overflow:hidden">刘典庆</div><div class="ab" style="left:678px;top:309px;width:116px;height:24px;text-align:center;font-size:12px;line-height:23px;color:#111;white-space:nowrap;overflow:hidden">孙忠峰</div><div class="ab" style="left:795px;top:309px;width:116px;height:24px;text-align:center;font-size:12px;line-height:23px;color:#111;white-space:nowrap;overflow:hidden">柏三红</div><div class="ab" style="left:912px;top:309px;width:60px;height:24px;text-align:left;padding-left:4px;font-size:12px;line-height:23px;color:#111;white-space:nowrap;overflow:hidden">未知</div><div class="ab" style="left:51px;top:334px;width:209px;height:23px;background:#c0c0c0;padding-left:5px;font-size:12px;line-height:21px;color:#111">接收时间</div><div class="ab" style="left:37px;top:345px;width:13px;height:1px;background:#c9ced6"></div><div class="ab" style="left:260px;top:334px;width:116px;height:23px;text-align:center;padding-top:1px;font-size:12px;line-height:22px;color:#111;white-space:nowrap;overflow:hidden">2014-7-19 13:47:57</div><div class="ab" style="left:377px;top:334px;width:300px;height:23px;text-align:center;padding-top:1px;font-size:12px;line-height:22px;color:#111;white-space:nowrap;overflow:hidden">2014-7-19 16:45:16</div><div class="ab" style="left:678px;top:334px;width:116px;height:23px;text-align:center;padding-top:1px;font-size:12px;line-height:22px;color:#111;white-space:nowrap;overflow:hidden">2014-7-21 14:48:13</div><div class="ab" style="left:795px;top:334px;width:116px;height:23px;text-align:center;padding-top:1px;font-size:12px;line-height:22px;color:#111;white-space:nowrap;overflow:hidden">2014-7-22 8:37:36</div><div class="ab" style="left:912px;top:334px;width:60px;height:23px;text-align:left;padding-left:4px;font-size:12px;line-height:22px;color:#111;white-space:nowrap;overflow:hidden">未知</div><div class="ab" style="left:51px;top:358px;width:209px;height:24px;background:#c0c0c0;padding-left:5px;font-size:12px;line-height:22px;color:#111">发送时间</div><div class="ab" style="left:37px;top:370px;width:13px;height:1px;background:#c9ced6"></div><div class="ab" style="left:260px;top:358px;width:116px;height:24px;text-align:center;padding-top:1px;font-size:12px;line-height:23px;color:#111;white-space:nowrap;overflow:hidden">2014-7-19 16:45:16</div><div class="ab" style="left:377px;top:358px;width:300px;height:24px;text-align:center;padding-top:1px;font-size:12px;line-height:23px;color:#111;white-space:nowrap;overflow:hidden">2014-7-21 14:47:14</div><div class="ab" style="left:678px;top:358px;width:116px;height:24px;text-align:center;padding-top:1px;font-size:12px;line-height:23px;color:#111;white-space:nowrap;overflow:hidden">2014-7-22 8:35:11</div><div class="ab" style="left:795px;top:358px;width:116px;height:24px;text-align:center;font-size:12px;line-height:23px;color:#111;white-space:nowrap;overflow:hidden">未知</div><div class="ab" style="left:912px;top:358px;width:60px;height:24px;text-align:left;padding-left:4px;font-size:12px;line-height:23px;color:#111;white-space:nowrap;overflow:hidden">未知</div><div class="ab" style="left:51px;top:383px;width:209px;height:23px;background:#c0c0c0;padding-left:5px;font-size:12px;line-height:21px;color:#111">开单时间</div><div class="ab" style="left:37px;top:394px;width:13px;height:1px;background:#c9ced6"></div><div class="ab" style="left:260px;top:383px;width:116px;height:23px;text-align:center;padding-top:1px;font-size:12px;line-height:22px;color:#111;white-space:nowrap;overflow:hidden">2014-7-18 16:51:08</div><div class="ab" style="left:377px;top:383px;width:300px;height:23px;text-align:center;padding-top:1px;font-size:12px;line-height:22px;color:#111;white-space:nowrap;overflow:hidden">2014-7-18 16:51:08</div><div class="ab" style="left:678px;top:383px;width:116px;height:23px;text-align:center;padding-top:1px;font-size:12px;line-height:22px;color:#111;white-space:nowrap;overflow:hidden">2014-7-18 16:51:08</div><div class="ab" style="left:795px;top:383px;width:116px;height:23px;text-align:center;padding-top:1px;font-size:12px;line-height:22px;color:#111;white-space:nowrap;overflow:hidden">2014-7-18 16:51:08</div><div class="ab" style="left:912px;top:383px;width:60px;height:23px;text-align:left;padding-left:4px;padding-top:1px;font-size:12px;line-height:22px;color:#111;white-space:nowrap;overflow:hidden">2014-7-18 16:51:08</div><div class="ab" style="left:51px;top:407px;width:209px;height:24px;background:#c0c0c0;padding-left:5px;font-size:12px;line-height:22px;color:#111">实际开始时间</div><div class="ab" style="left:37px;top:419px;width:13px;height:1px;background:#c9ced6"></div><div class="ab" style="left:260px;top:407px;width:116px;height:24px;text-align:center;padding-top:1px;font-size:12px;line-height:23px;color:#111;white-space:nowrap;overflow:hidden">2014-7-19 16:27:47</div><div class="ab" style="left:377px;top:407px;width:300px;height:24px;text-align:center;padding-top:1px;font-size:12px;line-height:23px;color:#111;white-space:nowrap;overflow:hidden">2014-7-21 12:55:56</div><div class="ab" style="left:678px;top:407px;width:116px;height:24px;text-align:center;padding-top:1px;font-size:12px;line-height:23px;color:#111;white-space:nowrap;overflow:hidden">2014-7-21 20:07:26</div><div class="ab" style="left:795px;top:407px;width:116px;height:24px;text-align:center;padding-top:1px;font-size:12px;line-height:23px;color:#111;white-space:nowrap;overflow:hidden">2014-7-22 9:51:06</div><div class="ab" style="left:912px;top:407px;width:60px;height:24px;text-align:left;padding-left:4px;font-size:12px;line-height:23px;color:#111;white-space:nowrap;overflow:hidden">未知</div><div class="ab" style="left:51px;top:432px;width:209px;height:23px;background:#c0c0c0;padding-left:5px;font-size:12px;line-height:21px;color:#111">实际完成时间</div><div class="ab" style="left:37px;top:443px;width:13px;height:1px;background:#c9ced6"></div><div class="ab" style="left:260px;top:432px;width:116px;height:23px;text-align:center;padding-top:1px;font-size:12px;line-height:22px;color:#111;white-space:nowrap;overflow:hidden">2014-7-19 16:45:15</div><div class="ab" style="left:377px;top:432px;width:300px;height:23px;text-align:center;padding-top:1px;font-size:12px;line-height:22px;color:#111;white-space:nowrap;overflow:hidden">2014-7-21 14:46:37</div><div class="ab" style="left:678px;top:432px;width:116px;height:23px;text-align:center;padding-top:1px;font-size:12px;line-height:22px;color:#111;white-space:nowrap;overflow:hidden">2014-7-22 2:21:58</div><div class="ab" style="left:795px;top:432px;width:116px;height:23px;text-align:center;font-size:12px;line-height:22px;color:#111;white-space:nowrap;overflow:hidden">未知</div><div class="ab" style="left:912px;top:432px;width:60px;height:23px;text-align:left;padding-left:4px;font-size:12px;line-height:22px;color:#111;white-space:nowrap;overflow:hidden">未知</div><div class="ab" style="left:51px;top:456px;width:209px;height:24px;background:#c0c0c0;padding-left:5px;font-size:12px;line-height:22px;color:#111">工艺要求</div><div class="ab" style="left:37px;top:468px;width:13px;height:1px;background:#c9ced6"></div><div class="ab" style="left:260px;top:456px;width:116px;height:24px;text-align:center;font-size:12px;line-height:23px;color:#111;white-space:nowrap;overflow:hidden">未知</div><div class="ab" style="left:377px;top:456px;width:300px;height:24px;text-align:center;font-size:12px;line-height:23px;color:#111;white-space:nowrap;overflow:hidden">【编程已接收】加工成型视图【已编程】T10.2-003-KH</div><div class="ab" style="left:678px;top:456px;width:116px;height:24px;text-align:center;font-size:12px;line-height:23px;color:#111;white-space:nowrap;overflow:hidden">外形断差倒角</div><div class="ab" style="left:795px;top:456px;width:116px;height:24px;text-align:center;font-size:12px;line-height:23px;color:#111;white-space:nowrap;overflow:hidden">槽</div><div class="ab" style="left:912px;top:456px;width:60px;height:24px;text-align:left;padding-left:4px;font-size:12px;line-height:23px;color:#111;white-space:nowrap;overflow:hidden">气孔</div><svg class="ab" style="left:7px;top:487px" width="11" height="11" viewBox="0 0 11 11"><rect x=".5" y=".5" width="10" height="10" fill="#eaf2fa" stroke="#8aa4be"/><path d="M2.5 5.5h6M5.5 2.5v6" stroke="#111" stroke-width="1.3"/></svg><div class="ab" style="left:19px;top:492px;width:6px;height:1px;background:#c9ced6"></div><div style="position:absolute;font-size:12px;line-height:16px;white-space:nowrap;color:#111;left:30px;top:485px">W110088-1(D4D_A)下模板零件(新增)</div><div class="ab" style="left:260px;top:481px;width:116px;height:24px;background:#669900;text-align:center;font-size:12px;line-height:22px;color:#111;white-space:nowrap;overflow:hidden">{快走丝}</div><div class="ab" style="left:377px;top:481px;width:300px;height:24px;background:#66ff00;text-align:center;font-size:12px;line-height:22px;color:#111;white-space:nowrap;overflow:hidden">/慢走丝/</div><div class="ab" style="left:678px;top:481px;width:116px;height:24px;background:#ff99ff;text-align:center;font-size:12px;line-height:22px;color:#111;white-space:nowrap;overflow:hidden">磨床</div><div class="ab" style="left:795px;top:481px;width:116px;height:24px;background:#ff99ff;text-align:center;font-size:12px;line-height:22px;color:#111;white-space:nowrap;overflow:hidden">品质检测</div><div class="ab" style="left:912px;top:481px;width:60px;height:24px;background:#ff99ff;text-align:left;padding-left:4px;font-size:12px;line-height:22px;color:#111;white-space:nowrap;overflow:hidden">钳工</div><svg class="ab" style="left:7px;top:511px" width="11" height="11" viewBox="0 0 11 11"><rect x=".5" y=".5" width="10" height="10" fill="#eaf2fa" stroke="#8aa4be"/><path d="M2.5 5.5h6M5.5 2.5v6" stroke="#111" stroke-width="1.3"/></svg><div class="ab" style="left:19px;top:516px;width:6px;height:1px;background:#c9ced6"></div><div style="position:absolute;font-size:12px;line-height:16px;white-space:nowrap;color:#111;left:30px;top:509px">W110088-1(D4E_A)下模板零件(新增)</div><div class="ab" style="left:260px;top:506px;width:116px;height:23px;background:#669900;text-align:center;font-size:12px;line-height:21px;color:#111;white-space:nowrap;overflow:hidden">{快走丝}</div><div class="ab" style="left:377px;top:506px;width:300px;height:23px;background:#669900;text-align:center;font-size:12px;line-height:21px;color:#111;white-space:nowrap;overflow:hidden">{慢走丝}</div><div class="ab" style="left:678px;top:506px;width:116px;height:23px;background:#669900;text-align:center;font-size:12px;line-height:21px;color:#111;white-space:nowrap;overflow:hidden">{磨床}</div><div class="ab" style="left:795px;top:506px;width:116px;height:23px;background:#669900;text-align:center;font-size:12px;line-height:21px;color:#111;white-space:nowrap;overflow:hidden">{铣床}</div><div class="ab" style="left:912px;top:506px;width:60px;height:23px;background:#ffff00;text-align:left;padding-left:4px;font-size:12px;line-height:21px;color:#111;white-space:nowrap;overflow:hidden">[快走丝]</div><svg class="ab" style="left:7px;top:536px" width="11" height="11" viewBox="0 0 11 11"><rect x=".5" y=".5" width="10" height="10" fill="#eaf2fa" stroke="#8aa4be"/><path d="M2.5 5.5h6M5.5 2.5v6" stroke="#111" stroke-width="1.3"/></svg><div class="ab" style="left:19px;top:541px;width:6px;height:1px;background:#c9ced6"></div><div style="position:absolute;font-size:12px;line-height:16px;white-space:nowrap;color:#111;left:30px;top:534px">W110088-1(D4F_A)下模板零件(新增)</div><div class="ab" style="left:260px;top:530px;width:116px;height:24px;background:#669900;text-align:center;font-size:12px;line-height:22px;color:#111;white-space:nowrap;overflow:hidden">{快走丝}</div><div class="ab" style="left:377px;top:530px;width:300px;height:24px;background:#66ff00;text-align:center;font-size:12px;line-height:22px;color:#111;white-space:nowrap;overflow:hidden">/慢走丝/</div><div class="ab" style="left:678px;top:530px;width:116px;height:24px;background:#ff99ff;text-align:center;font-size:12px;line-height:22px;color:#111;white-space:nowrap;overflow:hidden">磨床</div><div class="ab" style="left:795px;top:530px;width:116px;height:24px;background:#ff99ff;text-align:center;font-size:12px;line-height:22px;color:#111;white-space:nowrap;overflow:hidden">品质检测</div><div class="ab" style="left:912px;top:530px;width:60px;height:24px;background:#ff99ff;text-align:left;padding-left:4px;font-size:12px;line-height:22px;color:#111;white-space:nowrap;overflow:hidden">钳工</div><div class="ab" style="left:972px;top:0;width:17px;height:569px;background:#f0f0f0;border-left:1px solid #e8e8e8"></div><div class="ab" style="left:973px;top:373px;width:15px;height:105px;background:#c9c9c9"></div><svg class="ab" style="left:973px;top:16px" width="14" height="10" viewBox="0 0 14 10"><path d="M2 8L7 3L12 8" stroke="#555" stroke-width="2.6" fill="none"/></svg><svg class="ab" style="left:973px;top:523px" width="14" height="10" viewBox="0 0 14 10"><path d="M2 2L7 7L12 2" stroke="#555" stroke-width="2.6" fill="none"/></svg><div class="ab" style="left:0;top:552px;width:972px;height:16px;background:#f0f0f0"></div><div class="ab" style="left:35px;top:552px;width:449px;height:16px;background:#c9c9c9"></div><svg class="ab" style="left:16px;top:554px" width="10" height="12" viewBox="0 0 10 12"><path d="M7 2L3 6L7 10" stroke="#555" stroke-width="2.6" fill="none"/></svg><svg class="ab" style="left:945px;top:554px" width="10" height="12" viewBox="0 0 10 12"><path d="M3 2L7 6L3 10" stroke="#555" stroke-width="2.6" fill="none"/></svg><div class="ab" style="left:972px;top:552px;width:17px;height:16px;background:#f0f0f0"></div></div><div class="ab" style="left:0;top:648px;width:998px;height:1px;background:#b9d2e8"></div><div class="ab" style="left:0;top:649px;width:998px;height:31px;background:linear-gradient(#cde3f5,#a9cfec)"></div><div class="ab" style="left:919px;top:653px;width:60px;height:21px;border:1px solid #5d94c4;border-radius:3px;background:linear-gradient(#ffffff,#e9f1f9 50%,#cfe0f0);text-align:center;font-size:13px;line-height:19px;color:#111">取&nbsp;消</div></div>
</body></html>
